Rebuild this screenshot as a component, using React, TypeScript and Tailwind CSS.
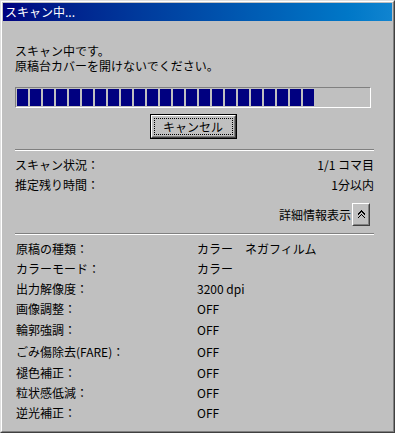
const details = [
  { label: "原稿の種類：", value: "カラー　ネガフィルム", h: "h-[20px]" },
  { label: "カラーモード：", value: "カラー", h: "h-[20px]" },
  { label: "出力解像度：", value: "3200 dpi", h: "h-[20px]" },
  { label: "画像調整：", value: "OFF", h: "h-[20px]" },
  { label: "輪郭強調：", value: "OFF", h: "h-[22px]" },
  { label: "ごみ傷除去(FARE)：", value: "OFF", h: "h-[22px]" },
  { label: "褪色補正：", value: "OFF", h: "h-[20px]" },
  { label: "粒状感低減：", value: "OFF", h: "h-[20px]" },
  { label: "逆光補正：", value: "OFF", h: "h-[20px]" },
];

const Separator = ({ className = "" }: { className?: string }) => (
  <div className={"flex flex-col " + className}>
    <div className="h-px bg-[#808080]" />
    <div className="h-px bg-white" />
  </div>
);

const App = () => {
  const blocks = Array.from({ length: 23 });

  return (
    <div className="w-[395px] h-[433px] bg-[#c0c0c0] border border-t-[#dfdfdf] border-l-[#dfdfdf] border-r-[#404040] border-b-[#404040] font-['Noto_Sans_CJK_JP',sans-serif] text-[12px] text-black">
      <div className="h-full border border-t-white border-l-white border-r-[#808080] border-b-[#808080] p-px flex flex-col">
        {/* title bar */}
        <div className="h-[18px] flex items-center pl-[2px] bg-gradient-to-r from-[#000080] to-[#1084d0] text-white leading-[18px]">
          スキャン中...
        </div>

        <div className="flex flex-col pl-[12px] pr-[18px]">
          <div className="mt-[22px] flex flex-col">
            <div className="h-[15px] leading-[15px]">スキャン中です。</div>
            <div className="h-[15px] leading-[15px]">原稿台カバーを開けないでください。</div>
          </div>

          {/* progress */}
          <div className="mt-[14px] w-[356px] h-[21px] border border-t-[#808080] border-l-[#808080] border-r-white border-b-white p-px flex gap-[2px]">
            {blocks.map((_, i) => (
              <div key={i} className="w-[11px] h-full bg-[#000080]" />
            ))}
          </div>

          <div className="w-[356px] flex justify-center mt-[6px]">
            <button className="w-[87px] h-[25px] border border-black bg-[#c0c0c0]">
              <div className="h-full border border-t-white border-l-white border-r-[#404040] border-b-[#404040]">
                <div className="h-full border border-t-[#c0c0c0] border-l-[#c0c0c0] border-r-[#808080] border-b-[#808080] p-px">
                  <div className="h-full border border-dotted border-black flex items-center justify-center leading-none">
                    キャンセル
                  </div>
                </div>
              </div>
            </button>
          </div>

          <Separator className="mt-[10px]" />

          <div className="mt-[3px] flex flex-col">
            <div className="h-[21px] flex items-center justify-between">
              <span>スキャン状況：</span>
              <span>1/1 コマ目</span>
            </div>
            <div className="h-[20px] flex items-center justify-between">
              <span>推定残り時間：</span>
              <span>1分以内</span>
            </div>
          </div>

          <div className="mt-[8px] h-[23px] flex items-center justify-end pr-[4px]">
            <span>詳細情報表示</span>
            <div className="ml-px w-[18px] h-[23px] border border-t-white border-l-white border-r-[#404040] border-b-[#404040]">
              <div className="h-full border border-t-[#c0c0c0] border-l-[#c0c0c0] border-r-[#808080] border-b-[#808080] flex items-center justify-center">
                <svg width="9" height="9" viewBox="0 0 9 9" shapeRendering="crispEdges">
                  <path d="M1 4.5 L4.5 1 L8 4.5 M1 8 L4.5 4.5 L8 8" fill="none" stroke="black" strokeWidth="1.4" />
                </svg>
              </div>
            </div>
          </div>

          <Separator className="mt-[7px]" />

          <div className="mt-[4px] flex flex-col">
            {details.map((d) => (
              <div key={d.label} className={"flex items-center pl-px " + d.h}>
                <span className="w-[181px] shrink-0">{d.label}</span>
                <span>{d.value}</span>
              </div>
            ))}
          </div>
        </div>
      </div>
    </div>
  );
};

export default App;
